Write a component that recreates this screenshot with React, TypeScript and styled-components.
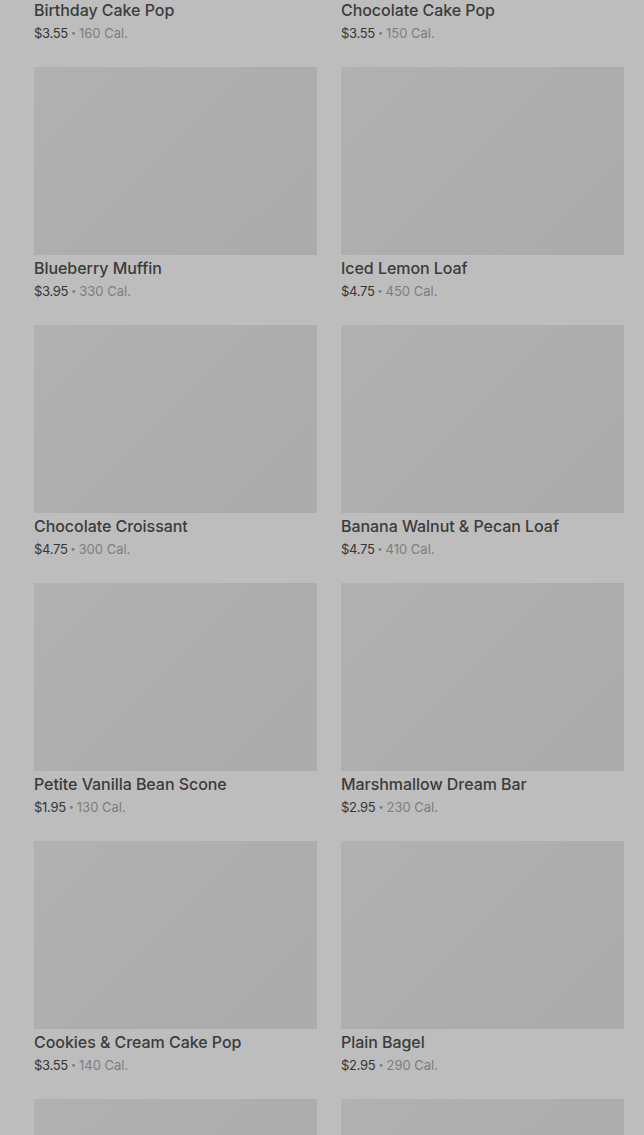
import styled, { createGlobalStyle } from "styled-components";

interface Item {
  readonly name: string;
  readonly price: string;
  readonly cal: number;
}

const ITEMS: Item[] = [
  { name: "Birthday Cake Pop", price: "$3.55", cal: 160 },
  { name: "Chocolate Cake Pop", price: "$3.55", cal: 150 },
  { name: "Blueberry Muffin", price: "$3.95", cal: 330 },
  { name: "Iced Lemon Loaf", price: "$4.75", cal: 450 },
  { name: "Chocolate Croissant", price: "$4.75", cal: 300 },
  { name: "Banana Walnut & Pecan Loaf", price: "$4.75", cal: 410 },
  { name: "Petite Vanilla Bean Scone", price: "$1.95", cal: 130 },
  { name: "Marshmallow Dream Bar", price: "$2.95", cal: 230 },
  { name: "Cookies & Cream Cake Pop", price: "$3.55", cal: 140 },
  { name: "Plain Bagel", price: "$2.95", cal: 290 },
];

// the next row only peeks in at the bottom edge, so just its photos
const PEEK = 2;

export default function App() {
  return (
    <>
      <GlobalStyle />
      <Page>
        <Grid>
          {ITEMS.map((item) => (
            <Card key={item.name}>
              <Photo />
              <Title>{item.name}</Title>
              <Meta>
                <Price>{item.price}</Price>
                <Dot>•</Dot>
                <Cal>{item.cal} Cal.</Cal>
              </Meta>
            </Card>
          ))}
          {Array.from({ length: PEEK }, (_, i) => (
            <Card key={`peek-${i}`}>
              <Photo />
            </Card>
          ))}
        </Grid>
      </Page>
    </>
  );
}

const GlobalStyle = createGlobalStyle`
  html, body {
    margin: 0;
    padding: 0;
    background: #bdbdbd;
    overflow: hidden;
  }
  body {
    font-family: Inter, "Liberation Sans", sans-serif;
  }
`;

const Page = styled.main`
  height: 1135px;
  overflow: hidden;
  background: #bdbdbd;
`;

const Grid = styled.div`
  margin-top: -191px;
  padding: 0 20px 0 34px;
  display: grid;
  grid-template-columns: 1fr 1fr;
  column-gap: 24px;
  row-gap: 25px;
`;

const Card = styled.article`
  display: flex;
  flex-direction: column;
`;

const Photo = styled.div`
  height: 188px;
  background: linear-gradient(135deg, #b1b1b1 0%, #adadad 60%, #ababab 100%);
`;

const Title = styled.h3`
  margin: 3px 0 0;
  font-size: 16px;
  line-height: 20px;
  font-weight: 500;
  color: #3b3b3b;
  letter-spacing: -0.05px;
`;

const Meta = styled.div`
  margin-top: 4px;
  display: flex;
  align-items: center;
  gap: 3px;
  font-size: 13px;
  line-height: 18px;
`;

const Price = styled.span`
  color: #363636;
  letter-spacing: -0.3px;
`;

const Dot = styled.span`
  color: #7a7a7a;
  font-size: 9px;
`;

const Cal = styled.span`
  color: #7d7d7d;
`;
